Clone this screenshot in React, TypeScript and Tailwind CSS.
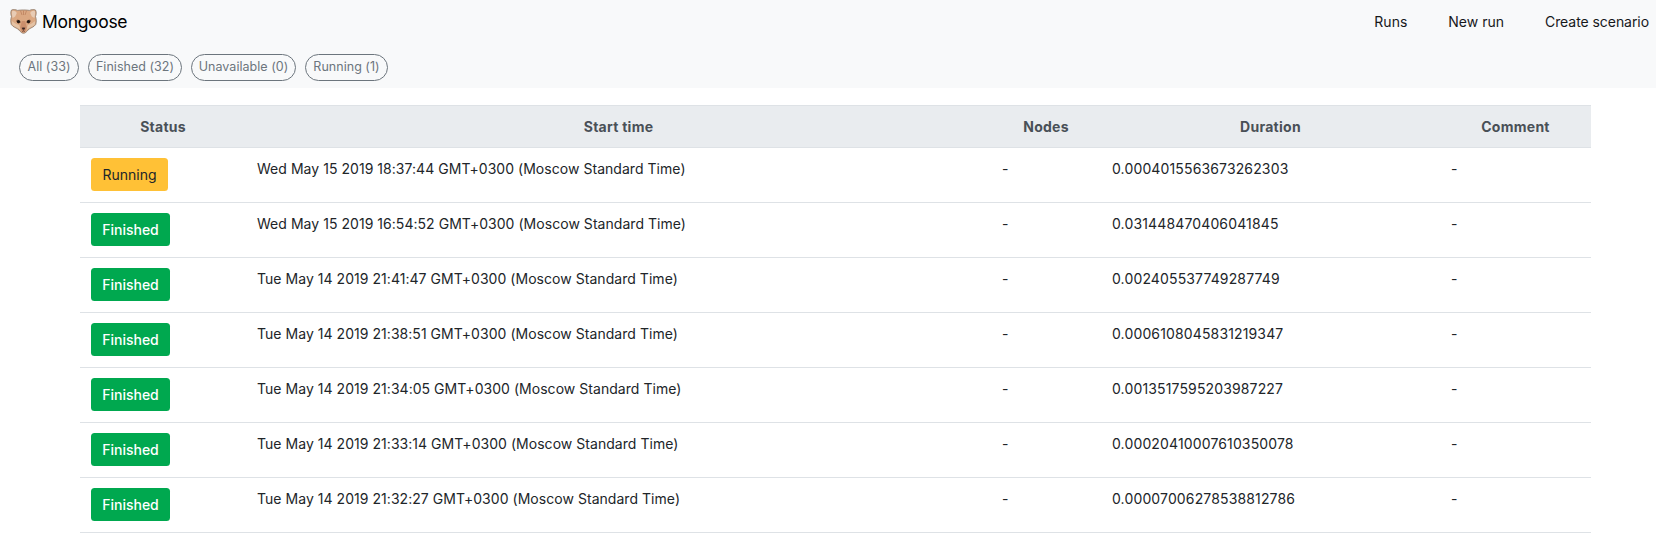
const runs = [
  { status: 'Running', start: 'Wed May 15 2019 18:37:44 GMT+0300 (Moscow Standard Time)', duration: '0.0004015563673262303' },
  { status: 'Finished', start: 'Wed May 15 2019 16:54:52 GMT+0300 (Moscow Standard Time)', duration: '0.031448470406041845' },
  { status: 'Finished', start: 'Tue May 14 2019 21:41:47 GMT+0300 (Moscow Standard Time)', duration: '0.002405537749287749' },
  { status: 'Finished', start: 'Tue May 14 2019 21:38:51 GMT+0300 (Moscow Standard Time)', duration: '0.0006108045831219347' },
  { status: 'Finished', start: 'Tue May 14 2019 21:34:05 GMT+0300 (Moscow Standard Time)', duration: '0.0013517595203987227' },
  { status: 'Finished', start: 'Tue May 14 2019 21:33:14 GMT+0300 (Moscow Standard Time)', duration: '0.00020410007610350078' },
  { status: 'Finished', start: 'Tue May 14 2019 21:32:27 GMT+0300 (Moscow Standard Time)', duration: '0.00007006278538812786' },
];

const filters = [
  { label: 'All (33)', width: 'w-[60px]' },
  { label: 'Finished (32)', width: 'w-[94px]' },
  { label: 'Unavailable (0)', width: 'w-[105px]' },
  { label: 'Running (1)', width: 'w-[83px]' },
];

function Logo() {
  return (
    <svg viewBox="0 0 27 25" className="h-[25px] w-[27px]" aria-hidden="true">
      <path d="M1.500 1C3.500.3 6 .6 7.500 1.400 11 .8 16 .8 19.500 1.400 21 .6 23.500.3 25.500 1 26.600 3 26.300 5.500 25.500 7.500 26.400 10 26.500 13 25.700 15.500 24 18.300 20 18.800 18 21 16.500 23 15 24.300 13.500 24.300 12 24.300 10.500 23 9 21 7 18.800 3 18.300 1.300 15.500.5 13 .6 10 1.500 7.500.7 5.500.4 3 1.500 1Z" fill="#dba882" stroke="#8b786a" strokeWidth=".8" />
      <path d="M2.200 2C4 1.500 6 2.400 6.800 4L5.200 7.500 2.700 9C2 6.500 1.600 4 2.200 2ZM24.800 2C23 1.500 21 2.400 20.200 4L21.800 7.500 24.300 9C25 6.500 25.400 4 24.800 2Z" fill="#e8ccb5" />
      <path d="M1.800 12C3.500 13.500 6 15 9.200 16L10.500 21C8 18.200 3.500 17.800 2.200 15.500ZM25.200 12C23.500 13.500 21 15 17.800 16L16.500 21C19 18.200 23.500 17.800 24.800 15.500Z" fill="#e5c3a5" />
      <path d="M10.500 1.700 12 6M13.500 1.500V6M16.500 1.700 15 6" stroke="#c08662" strokeWidth=".9" />
      <path d="M11.800 12 10.200 18.500C11 22 12.300 23.400 13.500 23.400S16 22 16.800 18.500L15.200 12Z" fill="#cb8f6c" />
      <path d="M6 11.500 8 10.200 11 13.800 8 14.800ZM21 11.500 19 10.200 16 13.800 19 14.800Z" fill="#a06e50" />
      <circle cx="8.500" cy="12.600" r="1.700" fill="#211713" />
      <circle cx="18.500" cy="12.600" r="1.700" fill="#211713" />
      <path d="M11.700 18.800Q13.500 18 15.300 18.800L14.300 20.800H12.700Z" fill="#38231f" />
      <path d="M13.500 20.500V22M12 22.500Q13.500 21.500 15 22.500" fill="none" stroke="#794d3b" strokeWidth=".8" />
    </svg>
  );
}

const columns = [
  { title: 'Status', width: 'w-[166px]' },
  { title: 'Start time', width: 'w-[745px]' },
  { title: 'Nodes', width: 'w-[110px]' },
  { title: 'Duration', width: 'w-[339px]' },
  { title: 'Comment', width: 'w-[151px]' },
];

export default function App() {
  return (
    <div className="h-[533px] overflow-hidden bg-white font-['Inter',sans-serif] text-sm leading-[21px] text-[#212529]">
      <header className="h-[88px] bg-[#f8f9fa]">
        <nav className="flex h-[43px] items-center justify-between pr-[7px] pl-[10px] text-[#16181b]">
          <a className="flex items-center gap-[5px] text-black">
            <Logo />
            <span className="text-[17.500px] tracking-[-0.32px]">Mongoose</span>
          </a>
          <div className="flex gap-[41px]">
            <a>Runs</a>
            <a>New run</a>
            <a className="tracking-[-0.06px]">Create scenario</a>
          </div>
        </nav>
        <div className="mt-[11px] flex gap-[9px] pl-[19px]">
          {filters.map((f) => (
            <button key={f.label} className={`${f.width} h-[27px] rounded-full border border-[#6c757d] pb-[2px] text-[12.500px] leading-[20px] tracking-[0.03px] whitespace-nowrap text-[#6c757d]`}>
              {f.label}
            </button>
          ))}
        </div>
      </header>
      <table className="mt-[17px] ml-[80px] w-[1511px] table-fixed border-separate border-spacing-0">
        <thead>
          <tr className="h-[43px] bg-[#e9ecef] text-[#495057]">
            {columns.map((c) => (
              <th key={c.title} className={`${c.width} border-y border-[#dee2e6] p-0 text-center font-bold tracking-[0.26px]`}>
                {c.title}
              </th>
            ))}
          </tr>
        </thead>
        <tbody>
          {runs.map((r) => (
            <tr key={r.start} className="h-[55px] align-top *:border-b *:border-[#dee2e6] *:px-[11px] *:pt-[10px] *:pb-0">
              <td>
                <button className={r.status === 'Running' ? 'h-[33px] w-[77px] rounded-[3.500px] bg-[#ffc136]' : 'h-[33px] w-[79px] rounded-[3.500px] bg-[#00a84f] font-medium text-white'}>
                  {r.status}
                </button>
              </td>
              <td className="tracking-[0.04px]">{r.start}</td>
              <td>-</td>
              <td className="tracking-[0.14px]">{r.duration}</td>
              <td>-</td>
            </tr>
          ))}
        </tbody>
      </table>
    </div>
  );
}
